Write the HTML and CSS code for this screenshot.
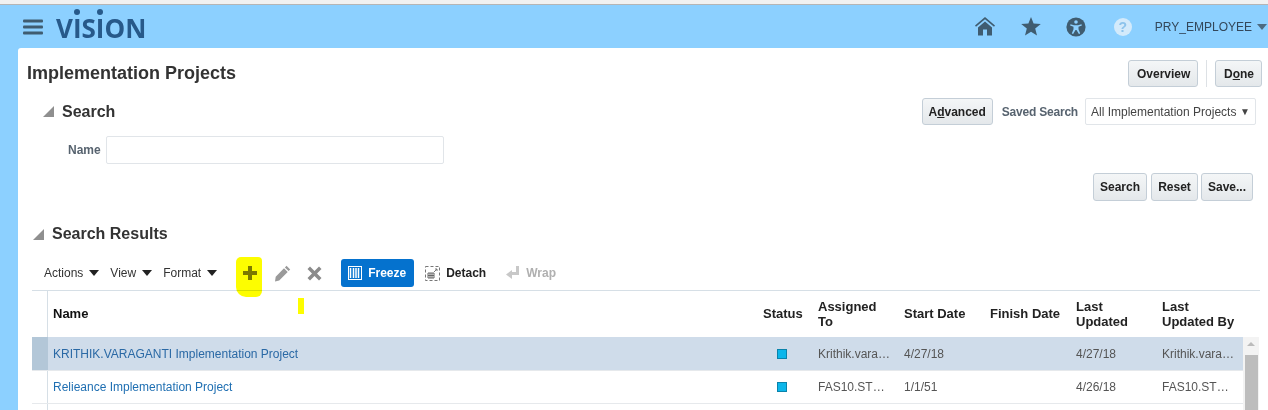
FILE: index.html
```html
<!DOCTYPE html>
<html lang="en">
<head>
<meta charset="utf-8">
<title>Implementation Projects</title>
<link rel="stylesheet" href="styles.css">
</head>
<body>
<div class="strip"></div>
<header class="hdr">
  <svg class="burger" width="20" height="16" viewBox="0 0 20 16"><rect y="0.5" width="20" height="3" rx="1"/><rect y="6.5" width="20" height="3" rx="1"/><rect y="12.5" width="20" height="3" rx="1"/></svg>
  <span class="logo">V<span class="dot">I</span>S<span class="dot">I</span>ON</span>
  <span class="hdr-space"></span>
  <svg class="hi home" width="20" height="19" viewBox="0 0 20 19"><path d="M10 0 0 8.500l1 1.300L10 2.300l9 7.500 1-1.300z"/><path d="M3 10.500 10 4.500l7 6V18.500h-5v-6H8v6H3z"/></svg>
  <svg class="hi star" width="20" height="19" viewBox="0 0 20 19"><path d="M10 0l2.600 6.600 7.200.5-5.600 4.500 1.800 7L10 14.800 4 18.600l1.800-7L.2 7.100l7.200-.5z"/></svg>
  <svg class="hi acc" width="20" height="20" viewBox="0 0 20 20"><circle cx="10" cy="10" r="9.600"/><circle cx="10" cy="5" r="1.800" fill="#8cd0ff"/><path d="M4.500 7.200 8 8.200h4l3.500-1 .4 1.300-3.400 1.200v2.500l1.700 4.300-1.300.5L10.500 13h-1l-2.400 4-1.300-.5 1.700-4.300V9.700L4.100 8.500z" fill="#8cd0ff"/></svg>
  <span class="help">?</span>
  <span class="user">PRY_EMPLOYEE</span>
  <span class="user-caret"></span>
</header>
<main class="card">
  <div class="title-row">
    <h1 class="title">Implementation Projects</h1>
    <button class="btn ov">Overview</button>
    <span class="sep"></span>
    <button class="btn done">D<u>o</u>ne</button>
  </div>
  <div class="search-head">
    <span class="tri"></span>
    <h2 class="sec">Search</h2>
    <button class="btn adv">A<u>d</u>vanced</button>
    <span class="saved">Saved Search</span>
    <span class="select">All Implementation Projects<span class="sel-caret">▼</span></span>
  </div>
  <div class="name-row">
    <label class="name-label">Name</label>
    <span class="input"></span>
  </div>
  <div class="actions">
    <button class="btn b-search">Search</button>
    <button class="btn b-reset">Reset</button>
    <button class="btn b-save">Save...</button>
  </div>
  <div class="results-head">
    <span class="tri"></span>
    <h2 class="sec">Search Results</h2>
  </div>
  <div class="toolbar">
    <span class="menu">Actions<i class="caret"></i></span>
    <span class="menu">View<i class="caret"></i></span>
    <span class="menu">Format<i class="caret"></i></span>
    <span class="tool plus">
      <svg width="14" height="14" viewBox="0 0 14 14"><path d="M5 0h4v5h5v4H9v5H5V9H0V5h5z" fill="#7d7a10"/></svg>
    </span>
    <span class="tool pencil">
      <svg width="17" height="17" viewBox="0 0 17 17"><path d="M12.500.8 16.200 4.500 14.600 6.100 10.900 2.400zM10 3.300 13.700 7 5.200 15.500 1 16.500 1.700 11.800z" fill="#9a9a9a"/></svg>
    </span>
    <span class="tool cross">
      <svg width="15" height="15" viewBox="0 0 15 15"><path d="M3 .5 7.500 5 12 .5 14.500 3 10 7.500l4.500 4.500-2.500 2.500L7.500 10 3 14.500.5 12 5 7.500.5 3z" fill="#8b8b8b"/></svg>
    </span>
    <button class="freeze">
      <svg width="14" height="14" viewBox="0 0 14 14"><rect x=".5" y=".5" width="13" height="13" fill="none" stroke="#fff"/><path d="M2.500 2v10M5.500 2v10M8 2v10M10.500 2v10" stroke="#fff" stroke-width="1.500"/></svg>
      Freeze
    </button>
    <span class="tbtn detach">
      <svg width="15" height="15" viewBox="0 0 15 15"><rect x=".5" y=".5" width="14" height="14" fill="none" stroke="#777" stroke-dasharray="3 2"/><path d="M3 7h6v5H3zM3 9.500h6M5 7v5M7 7v5" fill="none" stroke="#666"/><path d="M9 6l3-3M10 3h2v2" fill="none" stroke="#777"/></svg>
      Detach
    </span>
    <span class="tbtn wrap">
      <svg width="14" height="14" viewBox="0 0 14 14"><path d="M10 0h3v9H6v4L0 8.500 6 4v2h4z" fill="#c8c8c8"/></svg>
      Wrap
    </span>
  </div>
  <div class="table">
    <div class="row head">
      <span class="rh"></span>
      <span class="c name one"><b>Name</b></span>
      <span class="c status one"><b>Status</b></span>
      <span class="c"><b>Assigned<br>To</b></span>
      <span class="c one"><b>Start Date</b></span>
      <span class="c one"><b>Finish Date</b></span>
      <span class="c"><b>Last<br>Updated</b></span>
      <span class="c"><b>Last<br>Updated By</b></span>
    </div>
    <div class="row data sel">
      <span class="rh"></span>
      <span class="c name"><a class="link">KRITHIK.VARAGANTI Implementation Project</a></span>
      <span class="c status"><i class="sq"></i></span>
      <span class="c">Krithik.vara…</span>
      <span class="c">4/27/18</span>
      <span class="c"></span>
      <span class="c">4/27/18</span>
      <span class="c">Krithik.vara…</span>
    </div>
    <div class="row data">
      <span class="rh"></span>
      <span class="c name"><a class="link">Relieance Implementation Project</a></span>
      <span class="c status"><i class="sq"></i></span>
      <span class="c">FAS10.ST…</span>
      <span class="c">1/1/51</span>
      <span class="c"></span>
      <span class="c">4/26/18</span>
      <span class="c">FAS10.ST…</span>
    </div>
    <div class="row filler"><span class="rh"></span></div>
    <div class="scrollbar"><span class="sb-up"></span><span class="sb-thumb"></span></div>
  </div>
</main>
<span class="mark mark-a"></span>
<span class="mark mark-b"></span>
</body>
</html>
```
FILE: styles.css
```css
* { box-sizing: border-box; }
html, body { margin: 0; height: 410px; overflow: hidden; }
body { position: relative; background: #8cd0ff; font-family: "Liberation Sans", Arial, sans-serif; font-size: 12px; color: #333; }
.strip { height: 5px; background: #f1f1f1; border-bottom: 1px solid #b5b5b5; }
.hdr { height: 43px; display: flex; align-items: center; padding: 0 1px 0 23px; }
.burger { fill: #3f5c70; }
.logo { margin-left: 13px; font-family: "Open Sans", sans-serif; font-size: 26px; font-weight: 700; color: #27598a; letter-spacing: 0; line-height: 30px; margin-top: 3px; }
.dot { position: relative; }
.dot::before { content: ""; position: absolute; left: 50%; top: -1px; width: 6px; height: 6px; margin-left: -3px; border-radius: 50%; background: #27598a; }
.hdr-space { flex: 1; }
.hi { fill: #3f5c70; }
.home { margin-right: 26px; }
.star { margin-right: 25px; }
.acc { margin-right: 28px; }
.help { width: 18px; height: 18px; border-radius: 50%; background: #d3eafb; color: #8cc3ec; font-weight: bold; font-size: 14px; line-height: 18px; text-align: center; margin-right: 23px; }
.user { color: #33475a; font-size: 12px; margin-top: 1px; }
.user-caret { width: 0; height: 0; border: 5.500px solid transparent; border-top: 6px solid #4d6a80; border-bottom: 0; margin: 1px 0 0 5px; }
.card { margin-left: 18px; height: 362px; background: #fff; border-top-left-radius: 3px; position: relative; }
.title-row { display: flex; align-items: center; height: 51px; padding: 0 6px 0 9px; }
.title { flex: 1; margin: 0; font-size: 18px; font-weight: bold; color: #333; }
.btn { height: 27px; padding: 0 8px; border: 1px solid #c4ced7; border-radius: 3px; background: linear-gradient(#f4f6f7, #e4e8eb); font: bold 12px "Liberation Sans", Arial, sans-serif; color: #222; }
.ov { width: 70px; }
.done { width: 47px; }
.sep { width: 1px; height: 27px; margin: 0 8px; background: #dde1e5; }
.search-head { display: flex; align-items: center; height: 27px; padding-left: 25px; padding-right: 12px; margin-top: -1px; }
.tri { width: 0; height: 0; border-style: solid; border-width: 0 0 11px 11px; border-color: transparent transparent #8f8f8f transparent; }
.sec { margin: 0 0 0 8px; font-size: 16px; font-weight: bold; color: #333; flex: 1; }
.adv { width: 71px; padding: 0; }
.saved { margin: 0 7px 0 9px; font-weight: bold; color: #57636f; letter-spacing: -.2px; }
.select { width: 171px; height: 27px; display: flex; align-items: center; justify-content: space-between; padding: 0 5px 0 5px; border: 1px solid #e1e5e9; border-radius: 2px; color: #444; }
.sel-caret { font-size: 10px; color: #444; }
.name-row { display: flex; align-items: center; gap: 5px; height: 28px; margin-top: 11px; padding-left: 50px; }
.name-label { font-weight: bold; color: #57636f; }
.input { width: 338px; height: 28px; border: 1px solid #e1e5e9; border-radius: 2px; }
.actions { display: flex; justify-content: flex-end; gap: 4px; margin-top: 9px; padding-right: 15px; height: 28px; }
.actions .btn { height: 28px; padding: 0; }
.b-search { width: 54px; }
.b-reset { width: 47px; }
.b-save { width: 52px; margin-left: -1px; }
.results-head { display: flex; align-items: center; height: 22px; margin-top: 22px; padding-left: 15px; }
.results-head .sec { margin-left: 8px; }
.toolbar { display: flex; align-items: center; height: 35px; margin: 11px 8px 0 14px; padding-left: 12px; border-bottom: 1px solid #d6dfe6; font-size: 12px; }
.menu { display: flex; align-items: center; margin-right: 11px; color: #333; }
.caret { width: 0; height: 0; margin-left: 6px; border: 5px solid transparent; border-top: 6px solid #222; border-bottom: 0; }
.tool { display: flex; }
.plus { margin-left: 15px; }
.pencil { margin-left: 17px; }
.cross { margin-left: 16px; }
.freeze { display: flex; align-items: center; gap: 6px; width: 73px; height: 28px; margin-left: 19px; padding: 0 0 0 7px; border: 0; border-radius: 3px; background: #0572ce; color: #fff; font: bold 12px "Liberation Sans", Arial, sans-serif; }
.tbtn { display: flex; align-items: center; gap: 6px; font-weight: bold; }
.detach { margin-left: 11px; color: #222; }
.wrap { margin-left: 20px; color: #b0b0b0; }
.table { position: relative; margin-left: 14px; display: flex; flex-direction: column; }
.row { display: grid; grid-template-columns: 16px 704px 60px 86px 86px 86px 86px 87px; width: 1211px; }
.rh { border-right: 1px solid #d6dfe6; }
.c { display: flex; align-items: center; padding-left: 6px; overflow: hidden; white-space: nowrap; color: #555; }
.name { padding-left: 5px; }
.head { height: 46px; font-size: 13px; }
.head .c { color: #222; line-height: 15px; }
.head .one { padding-bottom: 2px; }
.head .name b { color: #111; }
.status { padding-left: 11px; }
.data { height: 33px; border-bottom: 1px solid #e6e9ec; }
.data .status { justify-content: center; padding: 0; }
.sel { background: #cfdcea; height: 34px; border-bottom: 1px solid #e6e9ec; }
.sel .rh { background: #b3c7d8; border-right: 0; }
.filler { height: 6px; }
.link { color: #1f6fb2; }
.sel .link { color: #2a69a5; }
.sq { width: 10px; height: 10px; background: #0cb6ea; border: 1px solid #0a83ab; }
.scrollbar { position: absolute; left: 1211px; top: 46px; width: 16px; height: 73px; background: #f3f3f3; display: flex; flex-direction: column; align-items: center; }
.sb-up { width: 0; height: 0; margin: 5px 0 9px; border: 4px solid transparent; border-bottom: 4px solid #bbb; border-top: 0; }
.sb-thumb { width: 13px; flex: 1; background: #bdbdbd; }
.mark { position: absolute; background: #fdfd00; }
.mark-a { left: 236px; top: 257px; width: 26px; height: 40px; border-radius: 5px 4px 6px 10px; mix-blend-mode: multiply; }
.mark-b { left: 298px; top: 298px; width: 6px; height: 16px; }
```
